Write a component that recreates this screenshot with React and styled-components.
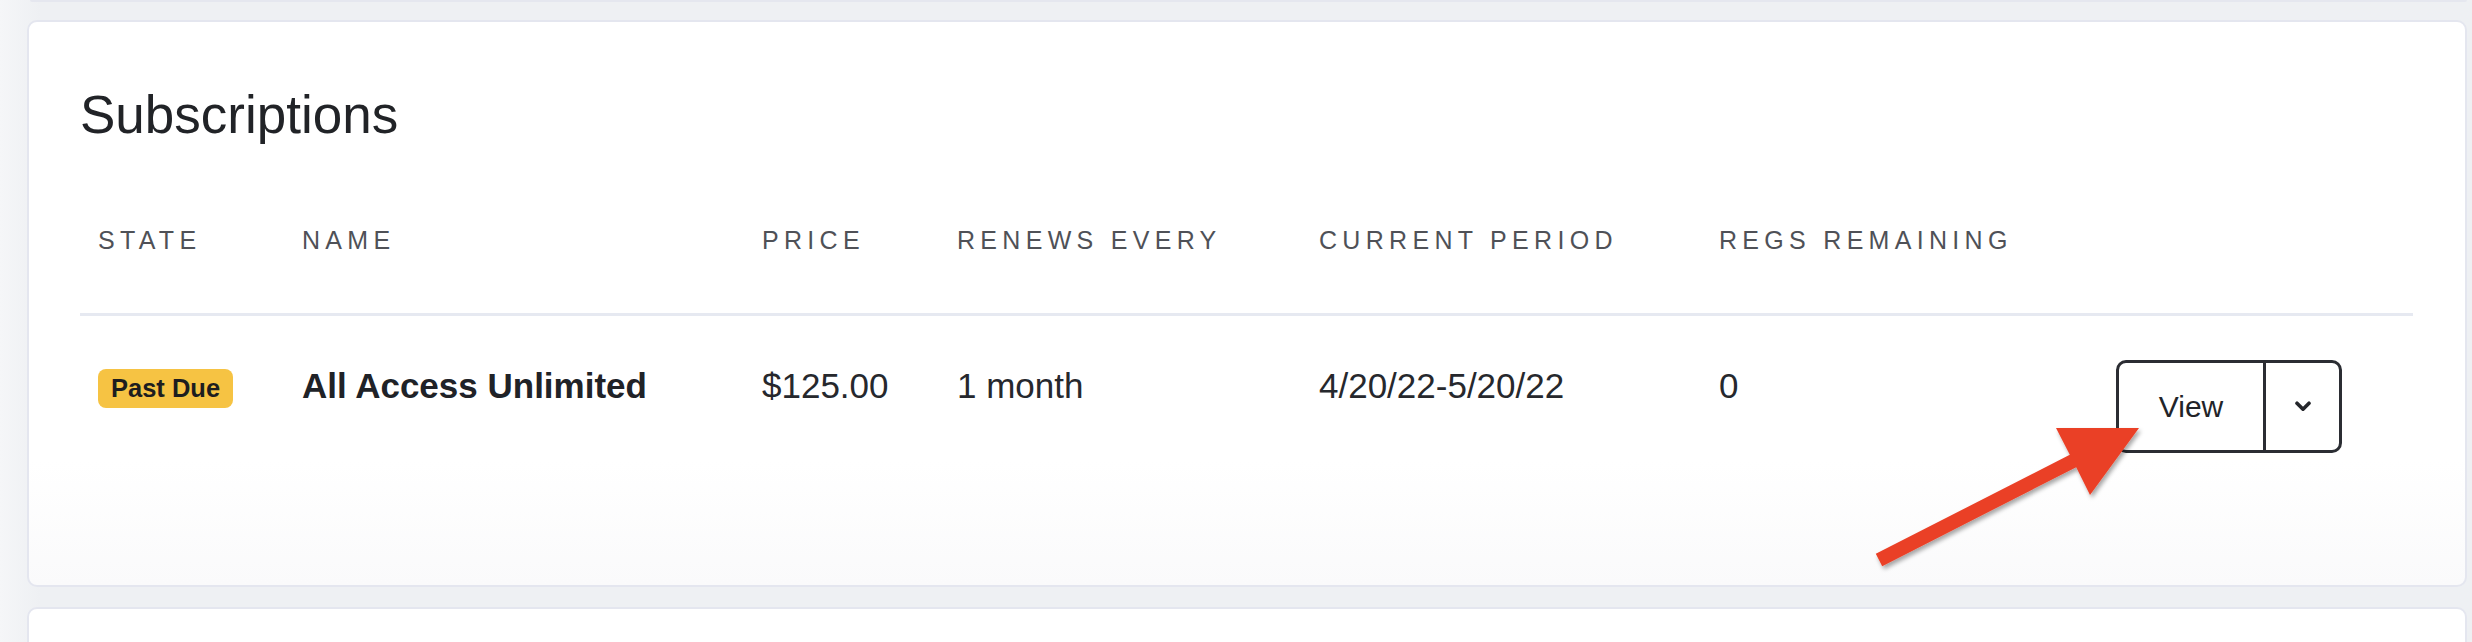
import styled, { createGlobalStyle } from 'styled-components'

const GlobalStyle = createGlobalStyle`
  html, body {
    margin: 0;
    padding: 0;
    background: #eef0f3;
  }
  body {
    font-family: "Liberation Sans", Arial, Helvetica, sans-serif;
    color: #24262b;
  }
  * { box-sizing: border-box; }
`;

const COLUMNS = '204px 460px 195px 362px 400px 300px 1fr';

const Page = styled.div`
    position: relative;
    height: 642px;
    overflow: hidden;
    padding: 0 5px 0 27px;
    background: linear-gradient(to right, #f5f6f8 0, #eef0f3 40px);
`;

const PrevCard = styled.div`
    height: 2px;
    margin-left: 3px;
    border-bottom: 2px solid #e5e7ef;
    border-radius: 0 0 10px 10px;
    background: #f7f8fa;
`;

const Card = styled.section`
    margin-top: 18px;
    height: 567px;
    padding: 62px 52px 0 51px;
    background: linear-gradient(to bottom, #ffffff 78%, #fafafb 100%);
    border: 2px solid #e4e6ef;
    border-radius: 10px;
`;

const NextCard = styled.div`
    margin-top: 20px;
    height: 120px;
    background: #fff;
    border: 2px solid #e4e6ef;
    border-radius: 10px;
`;

const Title = styled.h2`
    margin: 0;
    font-size: 53px;
    line-height: 62px;
    font-weight: 400;
    color: #212327;
`;

const HeadRow = styled.div`
    display: grid;
    grid-template-columns: ${COLUMNS};
    margin-top: 79px;
    padding-bottom: 58px;
    border-bottom: 3px solid #e6e9f1;
`;

const HeadCell = styled.div`
    padding-left: 18px;
    font-size: 25px;
    line-height: 30px;
    letter-spacing: 5.3px;
    text-transform: uppercase;
    color: #4f5157;
    white-space: nowrap;
`;

const Row = styled.div`
    display: grid;
    grid-template-columns: ${COLUMNS};
    align-items: start;
`;

const Cell = styled.div`
    padding-top: 44px;
    padding-left: 18px;
    font-size: 35px;
    line-height: 52px;
    font-weight: ${p => (p.$bold ? 700 : 400)};
    color: ${p => (p.$bold ? '#202227' : '#26282d')};
    white-space: nowrap;
`;

const BadgeCell = styled(Cell)`
    display: flex;
    align-items: flex-start;
`;

const ActionCell = styled.div`
    padding-top: 44px;
    padding-right: 71px;
    display: flex;
    justify-content: flex-end;
`;

const Badge = styled.span`
    display: inline-flex;
    align-items: center;
    height: 39px;
    margin-top: 9px;
    padding: 0 13px;
    border-radius: 8px;
    background: #f6c343;
    color: #1d1d1f;
    font-size: 25.5px;
    line-height: 39px;
    font-weight: 700;
`;

const SplitButton = styled.div`
    display: flex;
    height: 93px;
    border: 3px solid #2b2d33;
    border-radius: 10px;
    background: #fff;
`;

const ViewButton = styled.button`
    width: 147px;
    border: none;
    border-right: 3px solid #2b2d33;
    background: transparent;
    font-family: inherit;
    font-size: 30px;
    color: #222429;
    padding: 0;
    cursor: pointer;
`;

const CaretButton = styled.button`
    width: 73px;
    border: none;
    background: transparent;
    display: flex;
    align-items: center;
    justify-content: center;
    padding: 0;
    cursor: pointer;
`;

const Annotation = styled.svg`
    position: absolute;
    left: 0;
    top: 0;
    pointer-events: none;
`;

const Chevron = () => (
    <svg width="16" height="11" viewBox="0 0 16 11">
        <path d="M2 2.2 L8 8.2 L14 2.2" fill="none" stroke="#24262b" strokeWidth="3.6" strokeLinecap="round" strokeLinejoin="round" />
    </svg>
)

const Arrow = () => (
    <Annotation width="2472" height="642" viewBox="0 0 2472 642">
        <defs>
            <filter id="arrowShadow" x="-20%" y="-20%" width="140%" height="140%">
                <feDropShadow dx="2" dy="3" stdDeviation="2.2" floodColor="#000" floodOpacity="0.35" />
            </filter>
        </defs>
        <polygon
            filter="url(#arrowShadow)"
            fill="#ea4128"
            points="1875.8,553.8 2069.8,454.8 2056,428 2139,428 2090,495 2076.2,467.2 1882.2,566.2"
        />
    </Annotation>
)

const headers = ['State', 'Name', 'Price', 'Renews Every', 'Current Period', 'Regs Remaining', '']

const App = () => {
    return (
        <>
            <GlobalStyle />
            <Page>
                <PrevCard />
                <Card>
                    <Title>Subscriptions</Title>
                    <HeadRow>
                        {headers.map((h, i) => <HeadCell key={i}>{h}</HeadCell>)}
                    </HeadRow>
                    <Row>
                        <BadgeCell>
                            <Badge>Past Due</Badge>
                        </BadgeCell>
                        <Cell $bold>All Access Unlimited</Cell>
                        <Cell>$125.00</Cell>
                        <Cell>1 month</Cell>
                        <Cell>4/20/22-5/20/22</Cell>
                        <Cell>0</Cell>
                        <ActionCell>
                            <SplitButton>
                                <ViewButton>View</ViewButton>
                                <CaretButton><Chevron /></CaretButton>
                            </SplitButton>
                        </ActionCell>
                    </Row>
                </Card>
                <NextCard />
                <Arrow />
            </Page>
        </>
    )
}

export default App
